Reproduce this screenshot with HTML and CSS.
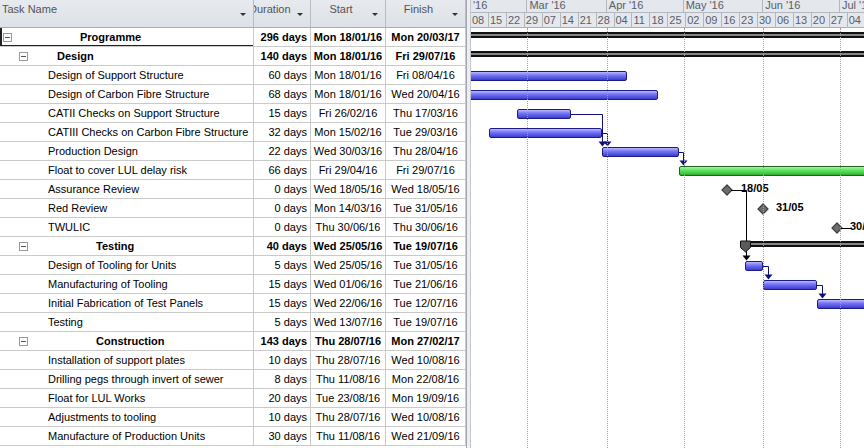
FILE: index.html
```html
<!DOCTYPE html>
<html lang="en">
  <head>
    <meta charset="UTF-8" />
    <title>Programme - Gantt Chart</title>
    <link rel="stylesheet" href="styles.css">
  </head>
  <body>
    <div class="project">
      <div class="sheet">
        <div class="sheet-head cols">
          <div class="th th-name">Task Name<span class="drop"></span></div>
          <div class="th th-dur"><span class="shift">Duration</span><span class="drop"></span></div>
          <div class="th th-date">Start<span class="drop"></span></div>
          <div class="th th-date">Finish<span class="drop"></span></div>
        </div>
        <div id="rows"></div>
      </div>

      <div class="splitter"></div>

      <div class="chart">
        <div class="timescale">
          <div class="tier months" id="months"></div>
          <div class="tier weeks" id="weeks"></div>
        </div>
        <div class="chart-body" id="chartBody">
          <svg class="links" width="393" height="420">
            <g fill="none" stroke="#10107a" stroke-width="1">
              <polyline points="100,86.5 131.5,86.5 131.5,114" />
              <polyline points="130.7,105.5 136.5,105.5 136.5,114" />
              <polyline points="207.6,124.5 212.5,124.5 212.5,133" />
              <polyline points="292.1,238.5 297.5,238.5 297.5,247" />
              <polyline points="345.9,257.5 351.5,257.5 351.5,266" />
            </g>
            <g fill="#10107a">
              <polygon points="127.5,113.5 135.5,113.5 131.5,118.5" />
              <polygon points="132.5,113.5 140.5,113.5 136.5,118.5" />
              <polygon points="208.5,132.5 216.5,132.5 212.5,137.5" />
              <polygon points="293.5,246.5 301.5,246.5 297.5,251.5" />
              <polygon points="347.5,265.5 355.5,265.5 351.5,270.5" />
            </g>
            <polyline points="260,162.5 275.5,162.5 275.5,228" fill="none" stroke="#000" />
            <polygon points="271.5,227.5 279.5,227.5 275.5,232.5" fill="#000" />
            <line x1="370" y1="200.5" x2="380" y2="200.5" stroke="#000" />
            <polygon points="269.5,213 279.5,213 279.5,219.5 274.5,224 269.5,219.5" fill="#5a5a5a" stroke="#111" />
          </svg>
        </div>
      </div>
    </div>

    <script>
      const PX_PER_DAY = 2.5625;
      const ORIGIN = Date.UTC(2016, 1, 8);
      const END = 420;

      function dx(m, d) {
        return ((Date.UTC(2016, m - 1, d) - ORIGIN) / 864e5) * PX_PER_DAY;
      }

      const tasks = [
        { name: "Programme", dur: "296 days", start: "Mon 18/01/16", finish: "Mon 20/03/17", outline: "outline-1", sum: [-10, END] },
        { name: "Design", dur: "140 days", start: "Mon 18/01/16", finish: "Fri 29/07/16", outline: "outline-2", sum: [-10, END] },
        { name: "Design of Support Structure", dur: "60 days", start: "Mon 18/01/16", finish: "Fri 08/04/16", bar: [-3, dx(4, 9)] },
        { name: "Design of Carbon Fibre Structure", dur: "68 days", start: "Mon 18/01/16", finish: "Wed 20/04/16", bar: [-3, dx(4, 21)] },
        { name: "CATII Checks on Support Structure", dur: "15 days", start: "Fri 26/02/16", finish: "Thu 17/03/16", bar: [dx(2, 26), dx(3, 18)] },
        { name: "CATIII Checks on Carbon Fibre Structure", dur: "32 days", start: "Mon 15/02/16", finish: "Tue 29/03/16", bar: [dx(2, 15), dx(3, 30)] },
        { name: "Production Design", dur: "22 days", start: "Wed 30/03/16", finish: "Thu 28/04/16", bar: [dx(3, 30), dx(4, 29)] },
        { name: "Float to cover LUL delay risk", dur: "66 days", start: "Fri 29/04/16", finish: "Fri 29/07/16", bar: [dx(4, 29), END], type: "float" },
        { name: "Assurance Review", dur: "0 days", start: "Wed 18/05/16", finish: "Wed 18/05/16", milestone: [dx(5, 18), "18/05", 270] },
        { name: "Red Review", dur: "0 days", start: "Mon 14/03/16", finish: "Tue 31/05/16", milestone: [dx(6, 1), "31/05", 305] },
        { name: "TWULIC", dur: "0 days", start: "Thu 30/06/16", finish: "Thu 30/06/16", milestone: [dx(6, 30), "30/06", 379] },
        { name: "Testing", dur: "40 days", start: "Wed 25/05/16", finish: "Tue 19/07/16", outline: "outline-2 spaced", sum: [dx(5, 25) - 5, END] },
        { name: "Design of Tooling for Units", dur: "5 days", start: "Wed 25/05/16", finish: "Tue 31/05/16", bar: [dx(5, 25), dx(6, 1)] },
        { name: "Manufacturing of Tooling", dur: "15 days", start: "Wed 01/06/16", finish: "Tue 21/06/16", bar: [dx(6, 1), dx(6, 22)] },
        { name: "Initial Fabrication of Test Panels", dur: "15 days", start: "Wed 22/06/16", finish: "Tue 12/07/16", bar: [dx(6, 22), END] },
        { name: "Testing", dur: "5 days", start: "Wed 13/07/16", finish: "Tue 19/07/16" },
        { name: "Construction", dur: "143 days", start: "Thu 28/07/16", finish: "Mon 27/02/17", outline: "outline-2 spaced" },
        { name: "Installation of support plates", dur: "10 days", start: "Thu 28/07/16", finish: "Wed 10/08/16" },
        { name: "Drilling pegs through invert of sewer", dur: "8 days", start: "Thu 11/08/16", finish: "Mon 22/08/16" },
        { name: "Float for LUL Works", dur: "20 days", start: "Tue 23/08/16", finish: "Mon 19/09/16" },
        { name: "Adjustments to tooling", dur: "10 days", start: "Thu 28/07/16", finish: "Wed 10/08/16" },
        { name: "Manufacture of Production Units", dur: "30 days", start: "Thu 11/08/16", finish: "Wed 21/09/16" },
      ];

      function renderSheet() {
        const rowsDiv = document.getElementById("rows");
        tasks.forEach((task, i) => {
          const row = document.createElement("div");
          row.classList.add("row", "cols");
          if (task.outline) row.classList.add("summary");

          let nameHtml = `<div class="cell name">${task.name}</div>`;
          if (task.outline) {
            nameHtml = `<div class="cell name ${task.outline}${i === 0 ? " active" : ""}"><span class="toggle"></span><span class="label">${task.name}</span></div>`;
          }
          row.innerHTML =
            nameHtml +
            `<div class="cell dur">${task.dur}</div>` +
            `<div class="cell date">${task.start}</div>` +
            `<div class="cell date">${task.finish}</div>`;
          rowsDiv.appendChild(row);
        });
      }

      function renderTimescale() {
        const months = [["'16", 22], ["Mar '16", 31], ["Apr '16", 30], ["May '16", 31], ["Jun '16", 30], ["Jul '16", 31]];
        const weeks = ["08", "15", "22", "29", "07", "14", "21", "28", "04", "11", "18", "25", "02", "09", "16", "23", "30", "06", "13", "20", "27", "04"];
        const monthsDiv = document.getElementById("months");
        const weeksDiv = document.getElementById("weeks");
        const body = document.getElementById("chartBody");
        let x = 0;

        months.forEach(([label, days]) => {
          const cell = document.createElement("div");
          cell.innerText = label;
          cell.style.width = days * PX_PER_DAY + "px";
          monthsDiv.appendChild(cell);
          x += days * PX_PER_DAY;

          // dotted line at the start of every month
          const line = document.createElement("div");
          line.classList.add("gridline");
          line.style.left = Math.round(x) + "px";
          body.appendChild(line);
        });

        weeks.forEach((label) => {
          const cell = document.createElement("div");
          cell.innerText = label;
          weeksDiv.appendChild(cell);
        });
      }

      function renderBars() {
        const body = document.getElementById("chartBody");
        const svg = body.querySelector(".links");

        tasks.forEach((task) => {
          const row = document.createElement("div");
          row.classList.add("grow");

          if (task.sum) {
            const bar = document.createElement("div");
            bar.classList.add("sumbar");
            bar.style.left = task.sum[0] + "px";
            bar.style.width = task.sum[1] - task.sum[0] + "px";
            row.appendChild(bar);
          }
          if (task.bar) {
            const bar = document.createElement("div");
            bar.classList.add("bar");
            if (task.type) bar.classList.add(task.type);
            bar.style.left = task.bar[0] + "px";
            bar.style.width = task.bar[1] - task.bar[0] + "px";
            row.appendChild(bar);
          }
          if (task.milestone) {
            const diamond = document.createElement("div");
            diamond.classList.add("milestone");
            diamond.style.left = task.milestone[0] - 4 + "px";
            row.appendChild(diamond);

            const label = document.createElement("div");
            label.classList.add("mlabel");
            label.innerText = task.milestone[1];
            label.style.left = task.milestone[2] + "px";
            row.appendChild(label);
          }
          body.insertBefore(row, svg);
        });
      }

      renderSheet();
      renderTimescale();
      renderBars();
    </script>
  </body>
</html>
```

FILE: styles.css
```css
body {
  margin: 0;
  font-family: "Liberation Sans", Arial, sans-serif;
  font-size: 11px;
  color: #000;
  background: #fff;
  overflow: hidden;
}
.project {
  display: flex;
  width: 864px;
  height: 448px;
  overflow: hidden;
}
.sheet {
  width: 466px;
  flex: none;
}
.cols {
  display: grid;
  grid-template-columns: 254px 57px 75px 80px;
}
.sheet-head {
  height: 28px;
  box-sizing: border-box;
  background: linear-gradient(#e7eaee, #dde1e6);
  border-bottom: 1px solid #a9adb3;
}
.th {
  position: relative;
  padding-top: 3px;
  line-height: 13px;
  color: #545454;
  border-right: 1px solid #b9bdc2;
  white-space: nowrap;
  overflow: hidden;
}
.th-name {
  padding-left: 2px;
}
.th-dur .shift {
  margin-left: -5px;
}
.th-date {
  text-align: center;
  padding-right: 14px;
}
.drop {
  position: absolute;
  right: 7px;
  top: 13px;
  border-left: 3px solid transparent;
  border-right: 3px solid transparent;
  border-top: 3px solid #333;
}
.row {
  height: 19px;
  box-sizing: border-box;
  border-bottom: 1px solid #cacaca;
}
.cell {
  line-height: 18px;
  border-right: 1px solid #cacaca;
  white-space: nowrap;
  overflow: hidden;
}
.name {
  padding-left: 48px;
}
.dur {
  text-align: right;
  padding-right: 3px;
}
.date {
  text-align: center;
}
.summary {
  font-weight: bold;
}
.toggle {
  display: inline-block;
  position: relative;
  width: 7px;
  height: 7px;
  border: 1px solid #9a9a9a;
  vertical-align: -1px;
}
.toggle::after {
  content: "";
  position: absolute;
  left: 1px;
  top: 3px;
  width: 5px;
  height: 1px;
  background: #555;
}
.outline-1 {
  padding-left: 3px;
}
.outline-1 .label {
  margin-left: 68px;
}
.outline-2 {
  padding-left: 19px;
}
.outline-2 .label {
  margin-left: 29px;
}
.outline-2.spaced .label {
  margin-left: 68px;
}
.active {
  box-shadow: inset 2px -1px 0 #222;
}
.splitter {
  width: 5px;
  flex: none;
  background: #eceef1;
  border-left: 1px solid #a3a7ad;
  border-right: 1px solid #c4c8cd;
  box-sizing: border-box;
}
.chart {
  flex: 1;
  position: relative;
  overflow: hidden;
}
.timescale {
  height: 28px;
  box-sizing: border-box;
  background: #e4e7eb;
  border-bottom: 1px solid #a9adb3;
}
.tier {
  display: flex;
  white-space: nowrap;
}
.tier div {
  flex: none;
  box-sizing: border-box;
  padding-left: 2px;
  color: #58606a;
  border-right: 1px solid #b3b8be;
  overflow: hidden;
}
.months {
  height: 12px;
  line-height: 11px;
  border-bottom: 1px solid #b3b8be;
}
.weeks {
  height: 15px;
  line-height: 15px;
}
.weeks div {
  width: 17.9375px;
  padding-left: 1px;
}
.chart-body {
  position: relative;
  height: 420px;
}
.gridline {
  position: absolute;
  top: 0;
  bottom: 0;
  border-left: 1px dotted #a0a0a0;
}
.grow {
  position: relative;
  height: 19px;
}
.bar {
  position: absolute;
  top: 5px;
  height: 10px;
  box-sizing: border-box;
  border: 1px solid #1c1c86;
  border-radius: 2px;
  background: linear-gradient(#b9b9ff, #7676f4 40%, #5454e2 75%, #3c3cc8);
}
.bar.float {
  border-color: #1d661d;
  background: linear-gradient(#aaf5aa, #62e062 40%, #44cc44 75%, #2ea82e);
}
.sumbar {
  position: absolute;
  top: 4px;
  height: 6px;
  background: linear-gradient(#111 0, #111 1.5px, #858585 2px, #858585 4px, #111 4.5px);
}
.milestone {
  position: absolute;
  top: 6px;
  width: 6px;
  height: 6px;
  background: #6c6c6c;
  border: 1px solid #3a3a3a;
  transform: rotate(45deg);
}
.mlabel {
  position: absolute;
  top: 1px;
  font-weight: bold;
  line-height: 14px;
  background: #fff;
  padding-right: 2px;
}
.links {
  position: absolute;
  left: 0;
  top: 0;
  pointer-events: none;
}
```
